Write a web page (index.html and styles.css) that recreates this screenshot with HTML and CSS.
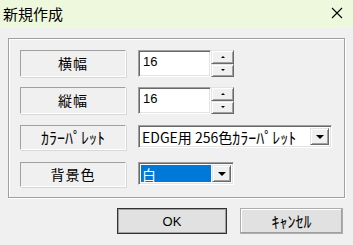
FILE: index.html
```html
<html>
<head>
    <title>新規作成</title>
    <link rel="stylesheet" href="styles.css">
</head>
<body>
    <div class="titlebar">
        <span class="title">新規作成</span>
        <svg class="close" width="12" height="12" viewBox="0 0 12 12">
            <path d="M1 1 L11 11 M11 1 L1 11" stroke="#000" stroke-width="1.1" fill="none" />
        </svg>
    </div>
    <div class="client">
        <div class="group">
            <div class="row row1">
                <div class="label">横幅</div>
                <div class="edit">16</div>
                <div class="spin">
                    <div class="spin-btn"><span class="arrow-up"></span></div>
                    <div class="spin-btn"><span class="arrow-down"></span></div>
                </div>
            </div>
            <div class="row row2">
                <div class="label">縦幅</div>
                <div class="edit">16</div>
                <div class="spin">
                    <div class="spin-btn"><span class="arrow-up"></span></div>
                    <div class="spin-btn"><span class="arrow-down"></span></div>
                </div>
            </div>
            <div class="row row3">
                <div class="label kana"><span class="hw">ｶﾗｰﾊﾟﾚｯﾄ</span></div>
                <div class="combo wide">
                    <div class="combo-text">EDGE用 256色<span class="hw">ｶﾗｰﾊﾟﾚｯﾄ</span></div>
                    <div class="drop"><span class="arrow-big"></span></div>
                </div>
            </div>
            <div class="row row4">
                <div class="label">背景色</div>
                <div class="combo narrow">
                    <div class="combo-text selected">白</div>
                    <div class="drop"><span class="arrow-big"></span></div>
                </div>
            </div>
        </div>
        <div class="buttons">
            <div class="btn default">OK</div>
            <div class="btn cancel"><span class="hw">ｷｬﾝｾﾙ</span></div>
        </div>
    </div>
</body>
</html>
```
FILE: styles.css
```css
body {
    margin: 0;
    font-family: "Noto Sans CJK JP", "Noto Sans", sans-serif;
    background-color: #f0f0f0;
    color: #000;
}
.titlebar {
    height: 28px;
    background-color: #eef8dd;
    display: flex;
    align-items: center;
    justify-content: space-between;
    padding: 0 10px 0 3px;
}
.title {
    font-size: 15px;
    margin-top: -2px;
}
.close {
    margin-top: -2px;
}
.client {
    padding: 10px 8px 0 8px;
}
.group {
    border: 1px solid #a0a0a0;
    box-shadow: inset 1px 1px #fff, 1px 1px #fff;
    padding: 11px 0 0 11px;
    width: 324px;
    height: 147px;
}
.row {
    display: flex;
    align-items: flex-start;
}
.row1, .row2 {
    height: 27px;
}
.row2 {
    margin-top: 10px;
}
.row3 {
    height: 25px;
    margin-top: 11px;
}
.row4 {
    height: 25px;
    margin-top: 12px;
}
.label {
    width: 106px;
    height: 100%;
    box-sizing: border-box;
    border-top: 1px solid #a0a0a0;
    border-left: 1px solid #a0a0a0;
    border-bottom: 1px solid #fff;
    border-right: 1px solid #fff;
    box-shadow: 1px 1px #d8d8d8;
    display: flex;
    align-items: center;
    justify-content: center;
    font-size: 14px;
    letter-spacing: 1px;
    margin-right: 12px;
    padding-bottom: 1px;
}
.kana {
    letter-spacing: 0;
}
.hw {
    font-size: 16px;
    line-height: 1;
}
.edit {
    width: 73px;
    height: 27px;
    box-sizing: border-box;
    background: #fff;
    border-top: 1px solid #a0a0a0;
    border-left: 1px solid #a0a0a0;
    border-bottom: 1px solid #fff;
    border-right: 1px solid #fff;
    box-shadow: inset 1px 1px #696969, inset -1px -1px #e3e3e3;
    font-family: "Liberation Sans", sans-serif;
    font-size: 13px;
    padding: 3px 0 0 4px;
}
.spin {
    width: 23px;
    height: 27px;
    display: flex;
    flex-direction: column;
}
.spin-btn {
    flex: 1;
    box-sizing: border-box;
    background: #f0f0f0;
    border-top: 1px solid #e3e3e3;
    border-left: 1px solid #e3e3e3;
    border-bottom: 1px solid #696969;
    border-right: 1px solid #696969;
    box-shadow: inset 1px 1px #fff, inset -1px -1px #a0a0a0;
    display: flex;
    align-items: center;
    justify-content: center;
}
.arrow-up {
    width: 0;
    height: 0;
    border-left: 2px solid transparent;
    border-right: 2px solid transparent;
    border-bottom: 2px solid #000;
}
.arrow-down {
    width: 0;
    height: 0;
    border-left: 2px solid transparent;
    border-right: 2px solid transparent;
    border-top: 2px solid #000;
}
.combo {
    display: flex;
    height: 23px;
    box-sizing: border-box;
    background: #fff;
    border-top: 1px solid #a0a0a0;
    border-left: 1px solid #a0a0a0;
    border-bottom: 1px solid #fff;
    border-right: 1px solid #fff;
    box-shadow: inset 1px 1px #696969, inset -1px -1px #e3e3e3;
    padding: 2px;
}
.wide {
    width: 194px;
}
.narrow {
    width: 96px;
}
.combo-text {
    flex: 1;
    display: flex;
    align-items: center;
    font-size: 14px;
    padding-left: 1px;
    white-space: nowrap;
}
.selected {
    background: #0078d7;
    color: #fff;
    margin-right: 1px;
}
.drop {
    width: 19px;
    box-sizing: border-box;
    background: #f0f0f0;
    border-top: 1px solid #e3e3e3;
    border-left: 1px solid #e3e3e3;
    border-bottom: 1px solid #696969;
    border-right: 1px solid #696969;
    box-shadow: inset 1px 1px #fff, inset -1px -1px #a0a0a0;
    display: flex;
    align-items: center;
    justify-content: center;
}
.arrow-big {
    width: 0;
    height: 0;
    border-left: 4px solid transparent;
    border-right: 4px solid transparent;
    border-top: 4px solid #000;
}
.buttons {
    display: flex;
    margin-top: 10px;
    padding-left: 109px;
    gap: 13px;
}
.btn {
    height: 26px;
    box-sizing: border-box;
    background: #e1e1e1;
    border: 1px solid #adadad;
    display: flex;
    align-items: center;
    justify-content: center;
    font-size: 14px;
}
.default {
    width: 110px;
    border: 1px solid #333;
    box-shadow: inset 0 0 0 1px #a0a0a0;
    font-family: "Liberation Sans", sans-serif;
    font-size: 13px;
}
.cancel {
    width: 103px;
    box-shadow: inset -1px -1px #a0a0a0, inset 1px 1px #fff;
}
```
